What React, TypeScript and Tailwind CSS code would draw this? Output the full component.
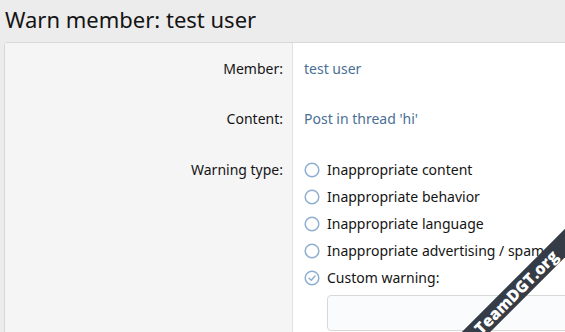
import React from "react";

const font = { fontFamily: '"Segoe UI", "Noto Sans", "Open Sans", sans-serif' };

function Radio({ checked }: { checked?: boolean }) {
  return (
    <svg width="16" height="16" viewBox="0 0 16 16" className="shrink-0">
      <circle cx="8" cy="8" r="6.8" fill="#fff" stroke="#8eafcf" strokeWidth="1.5" />
      {checked && (
        <path d="M5 8.2 L7.2 10.3 L11 6" fill="none" stroke="#8eafcf" strokeWidth="1.5" strokeLinecap="round" strokeLinejoin="round" />
      )}
    </svg>
  );
}

export default function App() {
  const options = [
    "Inappropriate content",
    "Inappropriate behavior",
    "Inappropriate language",
    "Inappropriate advertising / spam",
  ];
  return (
    <div className="relative w-[565px] h-[332px] overflow-hidden bg-[#ececec]" style={font}>
      <div className="pl-[5px] pt-[4px] h-[42px] text-[22px] leading-[30px] text-[#141414] whitespace-nowrap">
        Warn member: test user
      </div>
      <div className="ml-[4px] w-[600px] border border-[#d8d8d8] rounded-[3px] bg-white flex text-[14px] leading-[20px] text-[#141414]">
        <div className="w-[288px] shrink-0 bg-[#f5f5f5] border-r border-[#e2e2e2] pr-[9px] text-right">
          <div className="pt-[16px] pb-[14px]">Member:</div>
          <div className="pt-[16px] pb-[14px]">Content:</div>
          <div className="pt-[17px] h-[300px]">Warning type:</div>
        </div>
        <div className="flex-1 pl-[11px]">
          <div className="pt-[16px] pb-[14px] text-[#4a6f94]">test user</div>
          <div className="pt-[16px] pb-[14px] text-[#4a6f94]">Post in thread 'hi'</div>
          <div className="pt-[17px] flex flex-col gap-[7px]">
            {options.map((o) => (
              <div key={o} className="flex items-center gap-[7px] whitespace-nowrap">
                <Radio />
                <span>{o}</span>
              </div>
            ))}
            <div className="flex items-center gap-[7px] whitespace-nowrap">
              <Radio checked />
              <span>Custom warning:</span>
            </div>
            <div className="ml-[23px] w-[300px] h-[36px] border border-[#d8d8d8] rounded-[4px] bg-[#f9fbfd]" />
          </div>
        </div>
      </div>
      <div
        className="absolute left-[366px] top-[282px] w-[300px] h-[20px] bg-[#363c46] text-white flex items-center justify-center -rotate-45 text-[16px] leading-[20px] font-extrabold whitespace-nowrap"
        style={{ fontFamily: '"Open Sans", "Liberation Sans", sans-serif' }}
      >
        TeamDGT.org
      </div>
    </div>
  );
}
